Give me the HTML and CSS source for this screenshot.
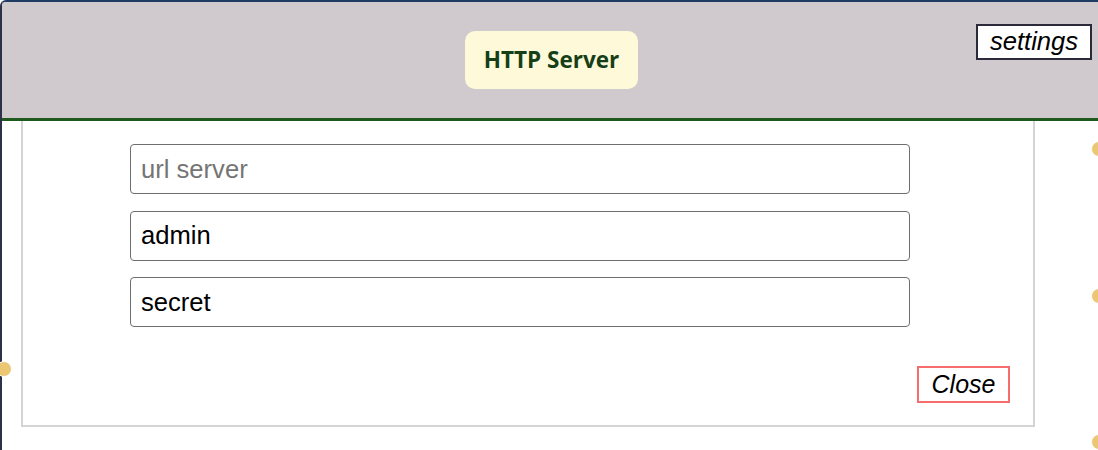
FILE: index.html
```html
<!DOCTYPE html>
<html>
<head>
<meta charset="utf-8">
<link rel="stylesheet" href="styles.css">
</head>
<body>
<div class="node">
  <header class="node-header">
    <div class="title-badge">HTTP Server</div>
    <button class="settings-btn">settings</button>
  </header>
  <div class="node-body">
    <div class="panel">
      <div class="fields">
        <input class="field" type="text" placeholder="url server">
        <input class="field" type="text" value="admin">
        <input class="field" type="text" value="secret">
      </div>
      <div class="actions">
        <button class="close-btn">Close</button>
      </div>
    </div>
  </div>
</div>
<span class="handle handle-left"></span>
<span class="handle handle-r1"></span>
<span class="handle handle-r2"></span>
<span class="handle handle-r3"></span>
</body>
</html>
```

FILE: styles.css
```css
html, body {
  margin: 0;
  padding: 0;
  background: #ffffff;
  overflow: hidden;
  width: 1098px;
  height: 450px;
}

body {
  font-family: "Liberation Sans", Arial, sans-serif;
  position: relative;
}

.node {
  box-sizing: border-box;
  width: 1110px;
  height: 460px;
  border-left: 2px solid #2c3048;
  border-top: 2px solid #1f3b63;
  border-top-left-radius: 6px;
  overflow: hidden;
  background: #ffffff;
}

.node-header {
  position: relative;
  box-sizing: border-box;
  width: 1096px;
  height: 119px;
  background: #d0cacf;
  border-bottom: 3px solid #1e5a1e;
  display: flex;
  align-items: center;
  justify-content: center;
}

.title-badge {
  box-sizing: border-box;
  width: 173px;
  height: 58px;
  margin-top: -1px;
  margin-left: 3px;
  background: #fefad9;
  border-radius: 10px;
  display: flex;
  align-items: center;
  justify-content: center;
  font-family: "Open Sans", "DejaVu Sans", sans-serif;
  font-weight: 700;
  font-size: 22.5px;
  color: #173f17;
}

.settings-btn {
  position: absolute;
  top: 22px;
  right: 6px;
  box-sizing: border-box;
  width: 116px;
  height: 36px;
  background: #ffffff;
  border: 2px solid #2b2a3b;
  padding: 0;
  font-family: "Liberation Sans", Arial, sans-serif;
  font-style: italic;
  font-size: 25.6px;
  color: #000000;
  line-height: 1;
}

.node-body {
  padding-left: 19px;
}

.panel {
  box-sizing: border-box;
  width: 1014px;
  height: 306px;
  border: 2px solid #d4d4d4;
  border-top: none;
  padding-top: 23px;
}

.fields {
  display: flex;
  flex-direction: column;
  gap: 16.5px;
  margin-left: 107px;
  width: 780px;
}

.field {
  box-sizing: border-box;
  width: 780px;
  height: 50px;
  border: 1px solid #6e6e6e;
  border-radius: 4px;
  padding: 0 10px;
  font-family: "Liberation Sans", Arial, sans-serif;
  font-size: 25.6px;
  color: #000000;
  background: #ffffff;
  outline: none;
}

.field::placeholder {
  color: #757575;
}

.actions {
  display: flex;
  justify-content: flex-end;
  margin-top: 39px;
  padding-right: 23px;
}

.close-btn {
  box-sizing: border-box;
  width: 93px;
  height: 37px;
  background: #ffffff;
  border: 2px solid #f76c6c;
  padding: 0;
  font-family: "Liberation Sans", Arial, sans-serif;
  font-style: italic;
  font-size: 25px;
  color: #000000;
  line-height: 1;
}

.handle {
  position: absolute;
  width: 14px;
  height: 14px;
  border-radius: 50%;
  background: #ebc774;
  border: 1px solid #ffffff;
}

.handle-left {
  left: -4px;
  top: 361px;
}

.handle-r1 {
  left: 1091px;
  top: 141px;
}

.handle-r2 {
  left: 1091px;
  top: 288px;
}

.handle-r3 {
  left: 1091px;
  top: 434px;
}
```
